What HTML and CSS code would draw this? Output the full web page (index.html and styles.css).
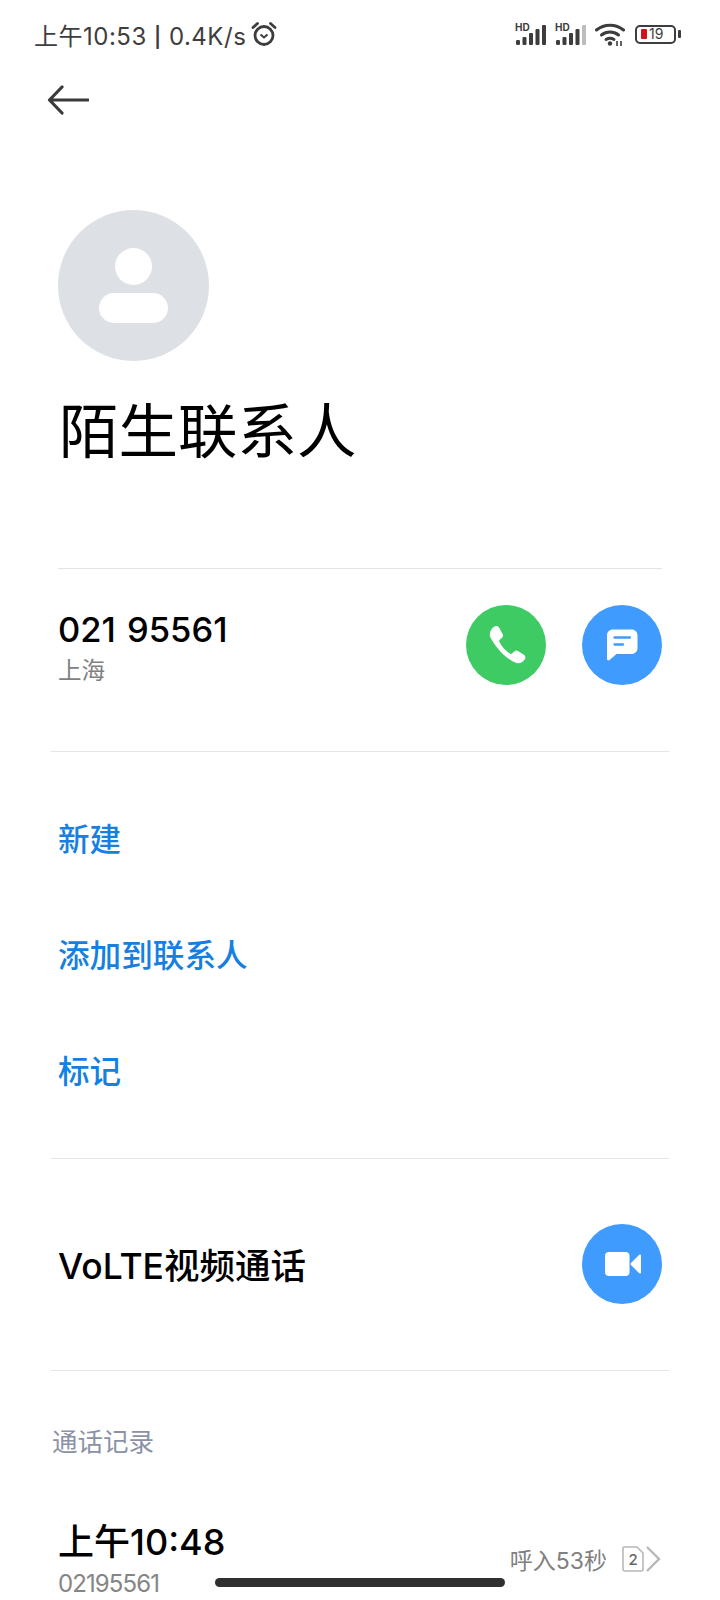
FILE: index.html
```html
<!DOCTYPE html>
<html lang="zh">
<head>
<meta charset="utf-8">
<title>陌生联系人</title>
<link rel="stylesheet" href="styles.css">
</head>
<body>
<div class="page">
  <header class="status">
    <div class="status-left">
      <span class="status-text">上午10:53 <span class="pipe">|</span> 0.4K/s</span>
      <svg class="alarm" viewBox="0 0 26 26" width="26" height="26"><circle cx="13" cy="14.500" r="9" fill="none" stroke="#3d3d3d" stroke-width="2.800"/><path d="M9.500 13.500l3.500 3 3.500-3" fill="none" stroke="#3d3d3d" stroke-width="2"/><path d="M2 6.500L6.500 2.500M24 6.500L19.500 2.500" stroke="#3d3d3d" stroke-width="2.800" stroke-linecap="round"/></svg>
    </div>
    <div class="status-right">
      <svg class="signal" viewBox="0 -4 31 25" width="31" height="25"><text x="0" y="7" class="hd">HD</text><g fill="#3d3d3d"><rect x="1" y="16" width="4" height="5" rx="1.200"/><rect x="7.500" y="13" width="4" height="8" rx="1"/><rect x="14" y="9" width="4" height="12" rx="1"/><rect x="20.500" y="5" width="4" height="16" rx="1"/><rect x="27" y="1" width="4" height="20" rx="1"/></g></svg>
      <svg class="signal" viewBox="0 -4 31 25" width="31" height="25"><text x="0" y="7" class="hd">HD</text><g fill="#3d3d3d"><rect x="1" y="16" width="4" height="5" rx="1.200"/><rect x="7.500" y="13" width="4" height="8" rx="1"/><rect x="14" y="9" width="4" height="12" rx="1"/><rect x="20.500" y="5" width="4" height="16" rx="1"/></g><rect x="27" y="1" width="4" height="20" rx="1" fill="#bdbdbd"/></svg>
      <svg class="wifi" viewBox="0 0 30 24" width="30" height="24"><g fill="none" stroke="#3d3d3d" stroke-width="3" stroke-linecap="round"><path d="M1.500 8c7.500-6.500 19.500-6.500 27 0"/><path d="M6.500 13c5-4 12-4 17 0"/><path d="M11 17.500c2.500-1.500 5.500-1.500 8 0"/></g><circle cx="15" cy="21.500" r="2.200" fill="#3d3d3d"/><path d="M22 24v-5M26 19v5" stroke="#3d3d3d" stroke-width="1.600"/></svg>
      <div class="battery">
        <div class="battery-body"><span class="battery-fill"></span><span class="battery-num">19</span></div>
        <span class="battery-tip"></span>
      </div>
    </div>
  </header>

  <nav class="nav">
    <svg viewBox="0 0 42 30" width="42" height="30"><path d="M41 15H3M15 2L2.500 15 15 28" fill="none" stroke="#3a3a3a" stroke-width="3.200" stroke-linecap="round" stroke-linejoin="round"/></svg>
  </nav>

  <section class="hero">
    <div class="avatar">
      <span class="avatar-head"></span>
      <span class="avatar-body"></span>
    </div>
    <h1 class="name">陌生联系人</h1>
  </section>

  <section class="phone-row">
    <div class="phone-text">
      <div class="phone">021 95561</div>
      <div class="location">上海</div>
    </div>
    <div class="actions">
      <span class="circle green">
        <svg class="icon-phone" viewBox="5 2 31 31" width="38" height="38"><path d="M9.500 2.500c1.500-.8 3-.4 3.800 1l2.800 5c.6 1.200.4 2.400-.6 3.300l-1.800 1.500c-.4.400-.5.900-.3 1.400 1.800 4 5 7.600 9 10 .5.300 1 .2 1.400-.2l1.800-1.700c1-.9 2.200-1 3.300-.3l4.600 3c1.300.9 1.600 2.400.7 3.700-1.500 2.400-3.700 3.500-6.300 3.200C19 29.500 10 19 5.700 10.300 5.300 7 6.800 4 9.500 2.500z" fill="#fff"/></svg>
      </span>
      <span class="circle blue">
        <svg viewBox="0 0 34 34" width="34" height="34"><path d="M8 1.500h18.500c3.500 0 6 2.500 6 6v12.500c0 3.500-2.500 6-6 6H11.500l-7 6c-1 .8-2.500.4-2.500-1V7.500c0-3.500 2.500-6 6-6z" fill="#fff"/><path d="M9.500 9.500h15.500M9.500 16.500h8.500" stroke="#3f9bfd" stroke-width="2.300" stroke-linecap="round"/></svg>
      </span>
    </div>
  </section>

  <section class="links">
    <a class="link">新建</a>
    <a class="link">添加到联系人</a>
    <a class="link">标记</a>
  </section>

  <section class="video-row">
    <div class="video-label">VoLTE视频通话</div>
    <span class="circle blue">
      <svg class="icon-video" viewBox="0 0 36 24" width="36" height="24"><rect x="0" y="0" width="24.500" height="24" rx="4" fill="#fff"/><path d="M26 11l8-8c.8-.8 2-.4 2 .8v16.400c0 1.200-1.200 1.600-2 .8l-8-8c-.5-.6-.5-1.400 0-2z" fill="#fff"/></svg>
    </span>
  </section>

  <section class="log">
    <div class="log-title">通话记录</div>
    <div class="log-row">
      <div>
        <div class="log-time">上午10:48</div>
        <div class="log-num">02195561</div>
      </div>
      <div class="log-meta">
        <span class="log-detail">呼入53秒</span>
        <svg class="sim" viewBox="0 0 22 26" width="22" height="26"><path d="M2 1h13l6 6v16a2 2 0 0 1-2 2H3a2 2 0 0 1-2-2V2a1 1 0 0 1 1-1z" fill="none" stroke="#b8b8b8" stroke-width="1.600"/><text x="11" y="18.500" class="sim-num">2</text></svg>
        <svg viewBox="0 0 16 28" width="16" height="28"><path d="M2 2l12 12L2 26" fill="none" stroke="#b8b8b8" stroke-width="2.400"/></svg>
      </div>
    </div>
  </section>

  <div class="home-bar"></div>
</div>
</body>
</html>
```
FILE: styles.css
```css
* { box-sizing: border-box; }
html, body { margin: 0; padding: 0; background: #fff; }
.page {
  position: relative;
  width: 720px;
  height: 1600px;
  overflow: hidden;
  background: #fff;
  font-family: "Inter", "Noto Sans CJK SC", sans-serif;
  color: #000;
}
.status {
  height: 68px;
  padding: 0 39px 0 34px;
  display: flex;
  align-items: center;
  justify-content: space-between;
}
.status-left { display: flex; align-items: center; gap: 5px; }
.status-text { font-size: 24px; color: #3d3d3d; white-space: nowrap; letter-spacing: .5px; }
.pipe { font-size: 20px; font-weight: 600; vertical-align: 1px; }
.status-right { display: flex; align-items: center; gap: 9px; }
.signal { margin-top: -3px; }
.hd { font: 700 10px "Inter", sans-serif; fill: #3d3d3d; }
.battery { display: flex; align-items: center; gap: 2px; margin-left: 1px; }
.battery-body {
  width: 41px;
  height: 19px;
  border: 2px solid #3d3d3d;
  border-radius: 5px;
  display: flex;
  align-items: center;
  padding-left: 4px;
  gap: 2px;
}
.battery-fill { width: 6px; height: 10px; background: #d0121b; border-radius: 1px; }
.battery-num { font-size: 14px; line-height: 1; color: #3d3d3d; }
.battery-tip { width: 3px; height: 8px; background: #3d3d3d; border-radius: 1px; }
.nav { height: 50px; padding: 17px 0 0 47px; }
.nav svg { display: block; }
.hero { padding: 92px 0 0 58px; }
.avatar {
  width: 151px;
  height: 151px;
  border-radius: 50%;
  background: #dde0e5;
  display: flex;
  flex-direction: column;
  align-items: center;
  padding-top: 38px;
  gap: 8px;
}
.avatar-head { width: 37px; height: 37px; border-radius: 50%; background: #fff; }
.avatar-body { width: 69px; height: 30px; border-radius: 15px; background: #fff; }
.name {
  margin: 28px 0 0;
  padding-left: 1px;
  font-family: "Noto Sans CJK SC", sans-serif;
  font-size: 59.500px;
  line-height: 76px;
  font-weight: 400;
}
.phone-row {
  margin: 103px 58px 0;
  height: 183px;
  border-top: 1px solid #e3e3e3;
  display: flex;
  align-items: flex-start;
  justify-content: space-between;
  padding-top: 36px;
}
.phone-text { padding-top: 3px; }
.phone { font-size: 34.500px; line-height: 44px; font-weight: 500; word-spacing: 2px; }
.location { font-size: 23.500px; line-height: 38px; color: #808080; }
.actions { display: flex; gap: 36px; }
.circle {
  width: 80px;
  height: 80px;
  border-radius: 50%;
  display: flex;
  align-items: center;
  justify-content: center;
}
.green { background: #3ecb63; }
.blue { background: #3f9bfd; }
.icon-phone { margin-left: 3px; }
.icon-video { margin-left: 2px; }
.links {
  margin: 0 51px;
  height: 407px;
  border-top: 1px solid #e6e6e6;
  display: flex;
  flex-direction: column;
  padding: 67px 0 0 7px;
  gap: 74px;
}
.link { font-size: 31.600px; line-height: 42px; font-weight: 500; color: #1580e0; }
.video-row {
  margin: 0 51px;
  height: 213px;
  border-top: 1px solid #e6e6e6;
  border-bottom: 1px solid #e6e6e6;
  padding: 0 7px 2px;
  display: flex;
  align-items: center;
  justify-content: space-between;
}
.video-label { font-size: 35.500px; font-weight: 500; line-height: 44px; margin-top: 6px; }
.log { padding: 53px 0 0 52px; }
.log-title { font-size: 25.500px; line-height: 36px; color: #8b92a6; }
.log-row {
  margin-top: 59px;
  padding: 0 59px 0 6px;
  display: flex;
  justify-content: space-between;
  align-items: center;
}
.log-time { font-size: 36px; line-height: 47px; font-weight: 500; }
.log-num { font-size: 24px; line-height: 36px; color: #858585; letter-spacing: -.9px; }
.log-meta { display: flex; align-items: center; padding-bottom: 4px; }
.log-detail { font-size: 23px; color: #808080; margin-right: 15px; }
.sim { margin-right: 1px; }
.sim-num { font: 500 15px "Inter", sans-serif; fill: #666; text-anchor: middle; }
.home-bar {
  position: absolute;
  left: 215px;
  top: 1578px;
  width: 290px;
  height: 9px;
  border-radius: 5px;
  background: #2f2f2f;
}
```
